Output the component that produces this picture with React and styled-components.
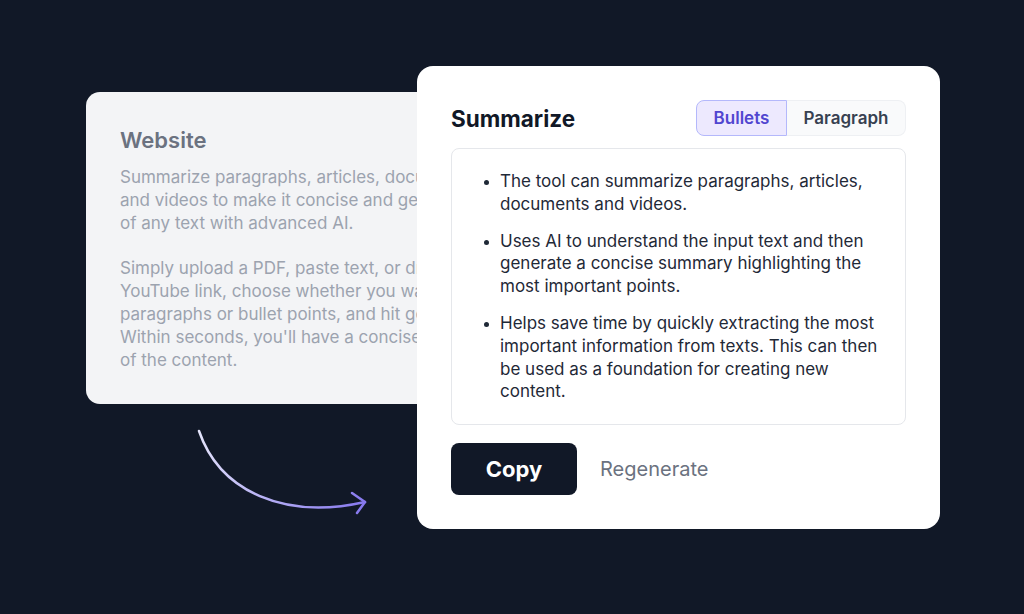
import React from "react";
import styled, { createGlobalStyle } from "styled-components";

const GlobalStyle = createGlobalStyle`
  html, body {
    margin: 0;
    padding: 0;
    background: #111827;
  }
  body {
    font-family: Inter, "Noto Sans", "Liberation Sans", sans-serif;
    -webkit-font-smoothing: antialiased;
  }
`;

const Stage = styled.div`
  position: relative;
  width: 1024px;
  height: 614px;
  overflow: hidden;
  background: #111827;
`;

const BackCard = styled.div`
  box-sizing: border-box;
  width: 440px;
  height: 312px;
  margin: 92px 0 0 86px;
  padding: 34px;
  background: #f3f4f6;
  border-radius: 14px;
  overflow: hidden;
`;

const BackTitle = styled.h3`
  margin: 0 0 12px;
  font-size: 22px;
  line-height: 28px;
  font-weight: 600;
  color: #6b7280;
`;

const BackText = styled.p`
  margin: 0 0 23px;
  font-size: 17px;
  line-height: 22.8px;
  color: #9ca3af;
  white-space: nowrap;
`;

const FrontCard = styled.div`
  position: absolute;
  left: 417px;
  top: 66px;
  box-sizing: border-box;
  width: 523px;
  padding: 34px;
  display: flex;
  flex-direction: column;
  background: #ffffff;
  border-radius: 16px;
`;

const Header = styled.div`
  display: flex;
  align-items: center;
  justify-content: space-between;
  height: 36px;
  margin-bottom: 12px;
`;

const Title = styled.h2`
  margin: 0;
  font-size: 22.5px;
  font-weight: 700;
  color: #111827;
`;

const Toggle = styled.div`
  display: flex;
  height: 36px;
`;

const Segment = styled.button`
  box-sizing: border-box;
  width: ${(p) => p.$width}px;
  height: 36px;
  padding: 0;
  font-family: inherit;
  font-size: 17px;
  font-weight: 600;
  border: 1px solid ${(p) => (p.$active ? "#b4b8fb" : "#eef0f3")};
  background: ${(p) => (p.$active ? "#ede9fe" : "#f9fafb")};
  color: ${(p) => (p.$active ? "#5046d0" : "#374151")};
  border-radius: ${(p) => (p.$first ? "8px 0 0 8px" : "0 8px 8px 0")};
  ${(p) => (p.$first ? "" : "border-left: none;")}
`;

const SummaryBox = styled.div`
  box-sizing: border-box;
  height: 277px;
  padding: 21px 24px 0;
  border: 1px solid #e5e7eb;
  border-radius: 8px;
`;

const BulletList = styled.ul`
  margin: 0;
  padding-left: 24px;
  color: #1f2937;
  font-size: 17px;
  line-height: 22.8px;
`;

const Bullet = styled.li`
  margin-bottom: 14px;
  &::marker {
    font-size: 14px;
  }
`;

const Actions = styled.div`
  display: flex;
  align-items: center;
  gap: 23px;
  margin-top: 18px;
`;

const CopyButton = styled.button`
  width: 126px;
  height: 52px;
  border: none;
  border-radius: 8px;
  background: #111827;
  color: #ffffff;
  font-family: inherit;
  font-size: 22px;
  font-weight: 700;
`;

const LinkButton = styled.button`
  padding: 0;
  border: none;
  background: none;
  color: #6b7280;
  font-family: inherit;
  font-size: 20px;
  font-weight: 400;
`;

const ArrowSvg = styled.svg`
  position: absolute;
  left: 0;
  top: 0;
  pointer-events: none;
`;

const CurvedArrow = () => (
  <ArrowSvg width="1024" height="614" viewBox="0 0 1024 614">
    <defs>
      <linearGradient id="arrowGrad" x1="199" y1="431" x2="366" y2="502" gradientUnits="userSpaceOnUse">
        <stop offset="0" stopColor="#e4e4fb" />
        <stop offset="1" stopColor="#8678ee" />
      </linearGradient>
    </defs>
    <g fill="none" stroke="url(#arrowGrad)" strokeWidth="2.5" strokeLinecap="round" strokeLinejoin="round">
      <path d="M199 431 C 220 492, 285 520, 365 502" />
      <path d="M352 493 L 365 502 L 357 513" />
    </g>
  </ArrowSvg>
);

const bullets = [
  "The tool can summarize paragraphs, articles, documents and videos.",
  "Uses AI to understand the input text and then generate a concise summary highlighting the most important points.",
  "Helps save time by quickly extracting the most important information from texts. This can then be used as a foundation for creating new content.",
];

export default function App() {
  return (
    <>
      <GlobalStyle />
      <Stage>
        <BackCard>
          <BackTitle>Website</BackTitle>
          <BackText>
            Summarize paragraphs, articles, documents
            <br />
            and videos to make it concise and get the gist
            <br />
            of any text with advanced AI.
          </BackText>
          <BackText>
            Simply upload a PDF, paste text, or drop a
            <br />
            YouTube link, choose whether you want
            <br />
            paragraphs or bullet points, and hit generate.
            <br />
            Within seconds, you'll have a concise summary
            <br />
            of the content.
          </BackText>
        </BackCard>
        <CurvedArrow />
        <FrontCard>
          <Header>
            <Title>Summarize</Title>
            <Toggle>
              <Segment $active $first $width={91}>Bullets</Segment>
              <Segment $width={119}>Paragraph</Segment>
            </Toggle>
          </Header>
          <SummaryBox>
            <BulletList>
              {bullets.map((b) => (
                <Bullet key={b}>{b}</Bullet>
              ))}
            </BulletList>
          </SummaryBox>
          <Actions>
            <CopyButton>Copy</CopyButton>
            <LinkButton>Regenerate</LinkButton>
          </Actions>
        </FrontCard>
      </Stage>
    </>
  );
}
